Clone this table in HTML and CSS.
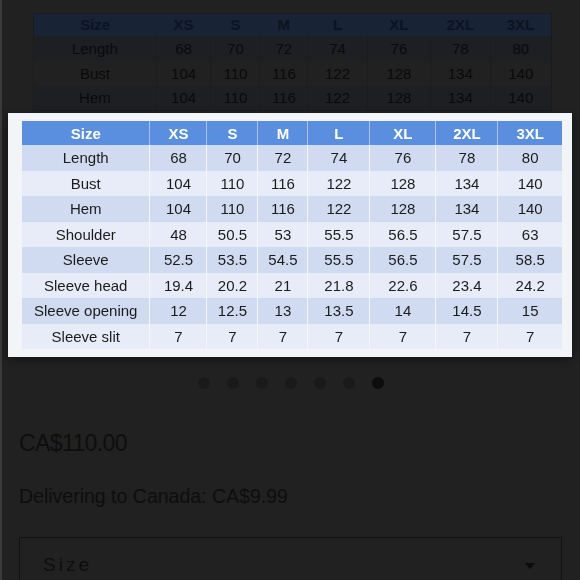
FILE: index.html
```html
<!DOCTYPE html>
<html lang="en">
<head>
<meta charset="utf-8">
<title>Size chart</title>
<link rel="stylesheet" href="styles.css">
</head>
<body>
<main class="page">
  <section class="gallery">
    <div class="slide">
      <table class="chart chart--slide">
        <colgroup>
          <col class="c-size"><col class="c-xs"><col class="c-s"><col class="c-m"><col class="c-l"><col class="c-xl"><col class="c-2xl"><col class="c-3xl">
        </colgroup>
        <thead>
          <tr><th>Size</th><th>XS</th><th>S</th><th>M</th><th>L</th><th>XL</th><th>2XL</th><th>3XL</th></tr>
        </thead>
        <tbody>
          <tr><td>Length</td><td>68</td><td>70</td><td>72</td><td>74</td><td>76</td><td>78</td><td>80</td></tr>
          <tr><td>Bust</td><td>104</td><td>110</td><td>116</td><td>122</td><td>128</td><td>134</td><td>140</td></tr>
          <tr><td>Hem</td><td>104</td><td>110</td><td>116</td><td>122</td><td>128</td><td>134</td><td>140</td></tr>
        </tbody>
      </table>
    </div>
    <div class="dots">
      <span class="dot"></span><span class="dot"></span><span class="dot"></span><span class="dot"></span><span class="dot"></span><span class="dot"></span><span class="dot dot--active"></span>
    </div>
  </section>
  <section class="info">
    <p class="price">CA$110.00</p>
    <p class="shipping">Delivering to Canada: CA$9.99</p>
    <div class="select">
      <span class="select-label">Size</span>
      <svg class="select-arrow" width="10" height="6" viewBox="0 0 10 6"><path d="M0 0H10L5 6Z" fill="#0c0c0c"/></svg>
    </div>
  </section>
</main>

<div class="lightbox">
  <figure class="lightbox-frame">
    <table class="chart chart--zoom">
      <colgroup>
        <col class="c-size"><col class="c-xs"><col class="c-s"><col class="c-m"><col class="c-l"><col class="c-xl"><col class="c-2xl"><col class="c-3xl">
      </colgroup>
      <thead>
        <tr><th>Size</th><th>XS</th><th>S</th><th>M</th><th>L</th><th>XL</th><th>2XL</th><th>3XL</th></tr>
      </thead>
      <tbody>
        <tr><td>Length</td><td>68</td><td>70</td><td>72</td><td>74</td><td>76</td><td>78</td><td>80</td></tr>
        <tr><td>Bust</td><td>104</td><td>110</td><td>116</td><td>122</td><td>128</td><td>134</td><td>140</td></tr>
        <tr><td>Hem</td><td>104</td><td>110</td><td>116</td><td>122</td><td>128</td><td>134</td><td>140</td></tr>
        <tr><td>Shoulder</td><td>48</td><td>50.5</td><td>53</td><td>55.5</td><td>56.5</td><td>57.5</td><td>63</td></tr>
        <tr><td>Sleeve</td><td>52.5</td><td>53.5</td><td>54.5</td><td>55.5</td><td>56.5</td><td>57.5</td><td>58.5</td></tr>
        <tr><td>Sleeve head</td><td>19.4</td><td>20.2</td><td>21</td><td>21.8</td><td>22.6</td><td>23.4</td><td>24.2</td></tr>
        <tr><td>Sleeve opening</td><td>12</td><td>12.5</td><td>13</td><td>13.5</td><td>14</td><td>14.5</td><td>15</td></tr>
        <tr><td>Sleeve slit</td><td>7</td><td>7</td><td>7</td><td>7</td><td>7</td><td>7</td><td>7</td></tr>
      </tbody>
    </table>
  </figure>
</div>
</body>
</html>
```

FILE: styles.css
```css
* { box-sizing: border-box; }

html, body {
  margin: 0;
  padding: 0;
}

body {
  background: #212121;
  border-left: 2px solid #3a3a3a;
  font-family: "Liberation Sans", Arial, sans-serif;
}

/* ---------- product page, dimmed behind the lightbox ---------- */
.page {
  display: flex;
  flex-direction: column;
}

.slide {
  height: 365px;
  padding: 13px 28px 0 31px;
}

.dots {
  display: flex;
  justify-content: center;
  gap: 17px;
  margin-top: 12px;
}

.dot {
  width: 12px;
  height: 12px;
  border-radius: 50%;
  background: #1a1a1a;
}

.dot--active { background: #0c0c0c; }

.info {
  padding: 0 18px 0 17px;
}

.price {
  margin: 40px 0 0;
  font-size: 23px;
  letter-spacing: -0.6px;
  line-height: 28px;
  color: #0e0e0e;
}

.shipping {
  margin: 28px 0 0;
  font-size: 19.5px;
  line-height: 22px;
  color: #0e0e0e;
}

.select {
  margin-top: 30px;
  height: 60px;
  border: 1px solid #121212;
  display: flex;
  align-items: flex-start;
  justify-content: space-between;
  padding: 16px 26px 0 23px;
}

.select-label {
  font-size: 19px;
  letter-spacing: 3px;
  color: #0e0e0e;
}

.select-arrow { margin-top: 9px; }

/* ---------- shared chart ---------- */
.chart {
  border-collapse: collapse;
  table-layout: fixed;
  text-align: center;
}

.c-size { width: 23.7%; }
.c-xs   { width: 10.56%; }
.c-s    { width: 9.44%; }
.c-m    { width: 9.26%; }
.c-l    { width: 11.48%; }
.c-xl   { width: 12.22%; }
.c-2xl  { width: 11.48%; }
.c-3xl  { width: 11.86%; }

.chart th,
.chart td {
  padding: 0;
  font-size: 15px;
}

/* chart picture in the page carousel (dimmed) */
.chart--slide {
  width: 519px;
  color: #0a0a0a;
  border: 1px solid #1b1b1b;
}

.chart--slide th {
  height: 22px;
  background: #182336;
  color: #0c1322;
  font-weight: bold;
}

.chart--slide td {
  height: 25px;
  border-left: 1px solid #1c1c1c;
}

.chart--slide tbody tr:nth-child(odd) td { background: #1e1f23; }

/* ---------- lightbox ---------- */
.lightbox {
  position: fixed;
  top: 113px;
  left: 8px;
  right: 8px;
}

.lightbox-frame {
  margin: 0;
  height: 244px;
  background: #f3f4f8;
  padding: 8px 10px 4px 14px;
  box-shadow: 0 2px 8px rgba(0, 0, 0, 0.45);
}

.chart--zoom {
  width: 540px;
  color: #1c1c1c;
}

.chart--zoom th {
  height: 24px;
  background: #5a8fdf;
  color: #ffffff;
  font-weight: bold;
  border-left: 1px solid #a9c4ef;
}

.chart--zoom td {
  height: 25.5px;
  background: #e8ecf8;
  border-left: 1px solid #f4f6fc;
}

.chart--zoom tbody tr:nth-child(odd) td { background: #d0dbf1; }

.chart--zoom th:first-child,
.chart--zoom td:first-child { border-left: 0; }
```
